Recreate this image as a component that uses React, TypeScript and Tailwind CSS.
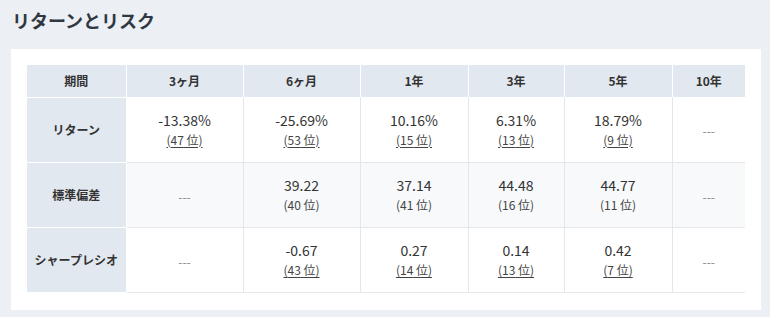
const cols = ["3ヶ月", "6ヶ月", "1年", "3年", "5年", "10年"];
const widths = ["w-[99px]", "w-[117px]", "w-[117px]", "w-[108px]", "w-[96px]", "w-[108px]", "w-[73px]"];

type Cell = { v: string; rank?: string; link?: boolean } | null;

const rows: { label: string; cells: Cell[]; bg: string }[] = [
  {
    label: "リターン",
    bg: "bg-white",
    cells: [
      { v: "-13.38%", rank: "47", link: true },
      { v: "-25.69%", rank: "53", link: true },
      { v: "10.16%", rank: "15", link: true },
      { v: "6.31%", rank: "13", link: true },
      { v: "18.79%", rank: "9", link: true },
      null,
    ],
  },
  {
    label: "標準偏差",
    bg: "bg-[#f7f9fb]",
    cells: [
      null,
      { v: "39.22", rank: "40" },
      { v: "37.14", rank: "41" },
      { v: "44.48", rank: "16" },
      { v: "44.77", rank: "11" },
      null,
    ],
  },
  {
    label: "シャープレシオ",
    bg: "bg-white",
    cells: [
      null,
      { v: "-0.67", rank: "43", link: true },
      { v: "0.27", rank: "14", link: true },
      { v: "0.14", rank: "13", link: true },
      { v: "0.42", rank: "7", link: true },
      null,
    ],
  },
];

export default function App() {
  return (
    <div className="min-h-[317px] bg-[#eceff3] font-['Noto_Sans_CJK_JP','Noto_Sans',sans-serif] text-[#333]">
      <h1 className="px-3 pt-[7px] h-[49px] text-[18px] font-bold text-[#2f3842] leading-[26px]">
        リターンとリスク
      </h1>

      {/* card */}
      <div className="mx-[11px] w-[750px] bg-white p-4 pb-[17px]">
        <table className="w-[718px] table-fixed border-collapse text-center">
          <colgroup>
            {widths.map((w, i) => (
              <col key={i} className={w} />
            ))}
          </colgroup>
          <thead>
            <tr className="h-[32px] bg-[#e2e8f0] text-[12px] font-bold">
              <th className="border-r border-white">期間</th>
              {cols.map((c, i) => (
                <th key={c} className={i < cols.length - 1 ? "border-r border-white" : ""}>
                  {c}
                </th>
              ))}
            </tr>
          </thead>
          <tbody>
            {rows.map((r, ri) => (
              <tr key={r.label} className="h-[65px]">
                <td className="border-t border-r border-white bg-[#e2e8f0] text-[12px] font-bold">
                  {r.label}
                </td>
                {r.cells.map((c, ci) => (
                  <td
                    key={ci}
                    className={`${r.bg} border-[#e5e7eb] ${ri > 0 ? "border-t" : ""} ${
                      ri === rows.length - 1 ? "border-b" : ""
                    } ${ci < r.cells.length - 1 ? "border-r" : ""}`}
                  >
                    {c ? (
                      <div className="flex flex-col items-center">
                        <span className="text-[14px] leading-[20px]">{c.v}</span>
                        <span
                          className={`mt-[1px] text-[12px] leading-[18px] text-[#444] ${
                            c.link ? "underline underline-offset-2" : ""
                          }`}
                        >
                          ({c.rank} 位)
                        </span>
                      </div>
                    ) : (
                      <span className="text-[12px] text-[#888]">---</span>
                    )}
                  </td>
                ))}
              </tr>
            ))}
          </tbody>
        </table>
      </div>
    </div>
  );
}
